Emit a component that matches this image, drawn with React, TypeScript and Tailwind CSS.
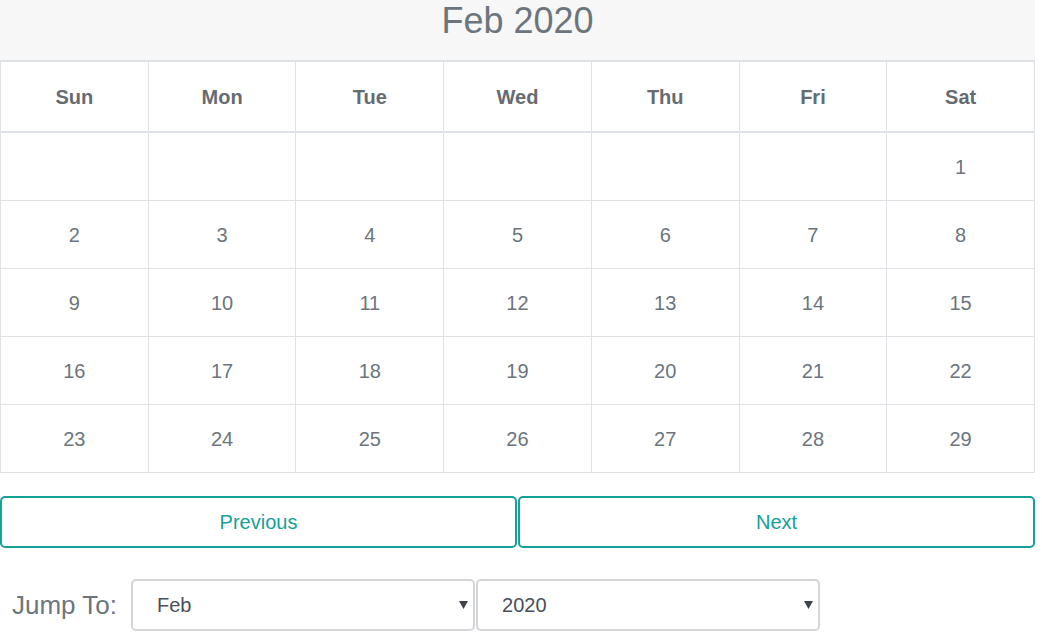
import React from "react";

const days = ["Sun", "Mon", "Tue", "Wed", "Thu", "Fri", "Sat"];

// Feb 2020 starts on a Saturday
const cells: (number | null)[] = [
  ...Array(6).fill(null),
  ...Array.from({ length: 29 }, (_, i) => i + 1),
];

const rows: (number | null)[][] = [];
for (let i = 0; i < cells.length; i += 7) rows.push(cells.slice(i, i + 7));

const Select = ({ value, options, className }: { value: string; options: string[]; className: string }) => (
  <div className={`relative h-[52px] ${className}`}>
    <select
      defaultValue={value}
      className="h-full w-full appearance-none rounded-[5px] border-2 border-[#d3d5d8] bg-white pl-[24px] text-[20px] text-[#495057] outline-none"
    >
      {options.map((o) => (
        <option key={o} value={o}>
          {o}
        </option>
      ))}
    </select>
    <svg className="pointer-events-none absolute right-[7px] top-[21px]" width="9" height="9" viewBox="0 0 9 9">
      <path d="M0 1h9L4.5 9z" fill="#3e4348" />
    </svg>
  </div>
);

const App = () => {
  return (
    <div className="min-h-screen w-[1042px] bg-white font-['Liberation_Sans',Arial,sans-serif]">
      <div className="w-[1035px]">
        <h1 className="h-[60px] bg-[#f7f7f7] text-center text-[36px] leading-[42px] text-[#6c757d]">Feb 2020</h1>

        <div className="grid w-[1035px] grid-cols-7 border-l border-t-2 border-[#dee2e6]">
          {days.map((d) => (
            <div
              key={d}
              className="flex h-[71px] items-center justify-center border-b-2 border-r border-[#dee2e6] pt-px text-[20px] font-bold text-[#666b71]"
            >
              {d}
            </div>
          ))}
          {rows.map((r, ri) =>
            r.map((n, ci) => (
              <div
                key={`${ri}-${ci}`}
                className="flex h-[68px] items-center justify-center border-b border-r border-[#dee2e6] text-[20px] text-[#6c757d]"
              >
                {n ?? ""}
              </div>
            ))
          )}
        </div>

        <div className="mt-[23px] flex gap-px">
          <button className="h-[52px] flex-1 rounded-[5px] border-2 border-[#15a098] bg-white text-[20px] text-[#15a098]">
            Previous
          </button>
          <button className="h-[52px] flex-1 rounded-[5px] border-2 border-[#15a098] bg-white text-[20px] text-[#15a098]">
            Next
          </button>
        </div>

        <div className="mt-[31px] flex items-center">
          <label className="pl-[12px] pr-[14px] text-[26px] text-[#6c757d]">Jump To:</label>
          <Select
            value="Feb"
            className="w-[344px]"
            options={["Jan", "Feb", "Mar", "Apr", "May", "Jun", "Jul", "Aug", "Sep", "Oct", "Nov", "Dec"]}
          />
          <Select value="2020" className="ml-[1px] w-[344px]" options={["2018", "2019", "2020", "2021", "2022"]} />
        </div>
      </div>
    </div>
  );
};

export default App;
